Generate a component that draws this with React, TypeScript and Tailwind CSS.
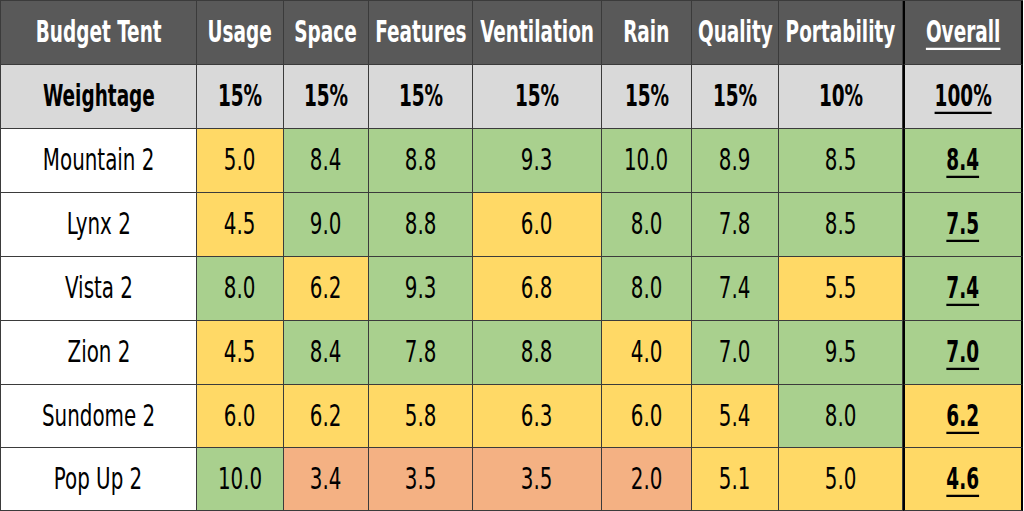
import React from "react";

type C = "y" | "g" | "r";
const rows: { name: string; vals: [string, C][]; overall: [string, C] }[] = [
  { name: "Mountain 2", vals: [["5.0","y"],["8.4","g"],["8.8","g"],["9.3","g"],["10.0","g"],["8.9","g"],["8.5","g"]], overall: ["8.4","g"] },
  { name: "Lynx 2", vals: [["4.5","y"],["9.0","g"],["8.8","g"],["6.0","y"],["8.0","g"],["7.8","g"],["8.5","g"]], overall: ["7.5","g"] },
  { name: "Vista 2", vals: [["8.0","g"],["6.2","y"],["9.3","g"],["6.8","y"],["8.0","g"],["7.4","g"],["5.5","y"]], overall: ["7.4","g"] },
  { name: "Zion 2", vals: [["4.5","y"],["8.4","g"],["7.8","g"],["8.8","g"],["4.0","y"],["7.0","g"],["9.5","g"]], overall: ["7.0","g"] },
  { name: "Sundome 2", vals: [["6.0","y"],["6.2","y"],["5.8","y"],["6.3","y"],["6.0","y"],["5.4","y"],["8.0","g"]], overall: ["6.2","y"] },
  { name: "Pop Up 2", vals: [["10.0","g"],["3.4","r"],["3.5","r"],["3.5","r"],["2.0","r"],["5.1","y"],["5.0","y"]], overall: ["4.6","y"] },
];

const bg: Record<C, string> = { y: "bg-[#ffd966]", g: "bg-[#a9d08e]", r: "bg-[#f4b183]" };

const headers = ["Usage", "Space", "Features", "Ventilation", "Rain", "Quality", "Portability"];
const weights = ["15%", "15%", "15%", "15%", "15%", "15%", "10%"];

const font = { fontFamily: '"Liberation Sans Narrow", "DejaVu Sans Condensed", "Roboto Condensed", "Liberation Sans", sans-serif' };

const cell = "flex items-center justify-center border-r border-b border-[#3b3b3b] overflow-hidden whitespace-nowrap text-[26px]";
const boldTxt = "inline-block font-bold scale-x-[0.79] scale-y-[1.13]";
const regTxt = "inline-block scale-x-[0.85] scale-y-[1.13]";
const overallCol = "border-l-2 border-l-black border-r-2 border-r-black";
const ul = "underline underline-offset-[5px] decoration-[2px]";

export default function App() {
  return (
    <div className="w-[1024px] h-[511px] bg-white" style={font}>
      <div className="grid grid-cols-[196px_87px_85px_104px_129px_90px_87px_124px_120px] grid-rows-[64px_64px_64px_64px_64px_64px_63px_63px] w-[1023px] h-[511px] border-t border-l border-[#3b3b3b]">
        <div className={`${cell} bg-[#595959] text-white`}>
          <span className={boldTxt}>Budget Tent</span>
        </div>
        {headers.map((h) => (
          <div key={h} className={`${cell} bg-[#595959] text-white`}>
            <span className={boldTxt}>{h}</span>
          </div>
        ))}
        <div className={`${cell} bg-[#595959] text-white ${overallCol}`}>
          <span className={`${boldTxt} ${ul}`}>Overall</span>
        </div>

        <div className={`${cell} bg-[#d9d9d9] text-black`}>
          <span className={boldTxt}>Weightage</span>
        </div>
        {weights.map((w, i) => (
          <div key={i} className={`${cell} bg-[#d9d9d9] text-black`}>
            <span className={boldTxt}>{w}</span>
          </div>
        ))}
        <div className={`${cell} bg-[#d9d9d9] text-black ${overallCol}`}>
          <span className={`${boldTxt} ${ul}`}>100%</span>
        </div>

        {rows.map((r) => (
          <React.Fragment key={r.name}>
            <div className={`${cell} bg-white text-black`}>
              <span className={regTxt}>{r.name}</span>
            </div>
            {r.vals.map(([v, c], i) => (
              <div key={i} className={`${cell} ${bg[c]} text-black`}>
                <span className={regTxt}>{v}</span>
              </div>
            ))}
            <div className={`${cell} ${bg[r.overall[1]]} text-black ${overallCol}`}>
              <span className={`${boldTxt} ${ul}`}>{r.overall[0]}</span>
            </div>
          </React.Fragment>
        ))}
      </div>
    </div>
  );
}
